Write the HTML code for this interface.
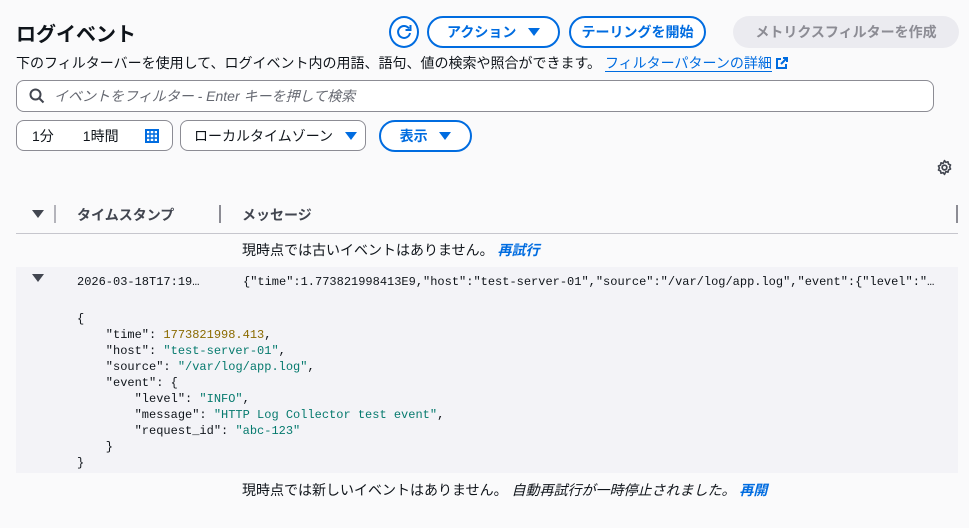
<!DOCTYPE html>
<html><head><meta charset="utf-8"><style>
body{margin:0;background:#fafafb;font-family:"Liberation Sans","Noto Sans CJK JP",sans-serif;color:#0f141a;width:969px;height:528px;overflow:hidden;position:relative}
.a{position:absolute;white-space:nowrap}
.btn{position:absolute;border:2px solid #006ce0;border-radius:18px;color:#006ce0;font-weight:bold;font-size:14px;box-sizing:border-box;display:flex;align-items:center;justify-content:center;background:#fff}
.box{position:absolute;border:1px solid #8c8c94;border-radius:8px;box-sizing:border-box;background:#fff;font-size:14px;display:flex;align-items:center}
.mono{font-family:"Liberation Mono","DejaVu Sans Mono",monospace;font-size:12px}
.tri{display:inline-block;width:0;height:0;border-left:6px solid transparent;border-right:6px solid transparent;border-top:8px solid currentColor}
.s{color:#067a6e}.n{color:#8a6a00}
</style></head><body>
<div class="a" style="left:16px;top:18px;font-size:20px;font-weight:bold">ログイベント</div>
<div class="btn" style="left:389px;top:16px;width:30px;height:32px;border-radius:50%">
<svg width="20" height="20" viewBox="0 0 20 20"><path d="M15 6.5A6 6 0 1 0 16 11" fill="none" stroke="#006ce0" stroke-width="2"/><path d="M16.5 3v5h-5" fill="none" stroke="#006ce0" stroke-width="2"/></svg></div>
<div class="btn" style="left:427px;top:16px;width:133px;height:32px">アクション&nbsp;&nbsp;&nbsp;<span class="tri"></span></div>
<div class="btn" style="left:569px;top:16px;width:137px;height:32px">テーリングを開始</div>
<div class="a" style="left:733px;top:16px;width:226px;height:32px;border-radius:16px;background:#ebebf0;color:#8c8c94;font-weight:bold;font-size:14px;display:flex;align-items:center;justify-content:center">メトリクスフィルターを作成</div>
<div class="a" style="left:16px;top:53px;font-size:14px">下のフィルターバーを使用して、ログイベント内の用語、語句、値の検索や照合ができます。 <span style="color:#006ce0;border-bottom:1px solid #006ce0">フィルターパターンの詳細</span> <svg width="12" height="12" viewBox="0 0 12 12" style="vertical-align:-1px"><path d="M7 1h4v4M11 1L5 7M5 2H1v9h9V7" fill="none" stroke="#006ce0" stroke-width="2"/></svg></div>
<div class="box" style="left:16px;top:80px;width:918px;height:32px;color:#656871;font-style:italic">
<svg width="18" height="18" viewBox="0 0 18 18" style="margin:0 8px 0 11px"><circle cx="7.5" cy="7.5" r="5" fill="none" stroke="#424650" stroke-width="2"/><path d="M11 11l4.5 4.5" stroke="#424650" stroke-width="2"/></svg>イベントをフィルター - Enter キーを押して検索</div>
<div class="box" style="left:16px;top:120px;width:157px;height:31px"><span style="margin-left:15px">1分</span><span style="margin-left:29px">1時間</span>
<svg width="14" height="14" viewBox="0 0 14 14" style="margin-left:26px"><rect x="1" y="1" width="12" height="12" fill="none" stroke="#006ce0" stroke-width="2"/><path d="M1 5h12M1 9h12M5 1v12M9 1v12" stroke="#006ce0" stroke-width="1.4"/></svg></div>
<div class="box" style="left:180px;top:120px;width:186px;height:31px"><span style="margin-left:13px">ローカルタイムゾーン</span><span class="tri" style="color:#006ce0;margin-left:12px"></span></div>
<div class="btn" style="left:379px;top:120px;width:93px;height:32px">表示&nbsp;&nbsp;&nbsp;<span class="tri"></span></div>
<svg class="a" style="left:936px;top:159px" width="17" height="17" viewBox="0 0 16 16"><circle cx="8" cy="8" r="2.2" fill="none" stroke="#424650" stroke-width="1.6"/><path d="M8 1.5l1.3 1.7 2-.6.4 2.1 2 .9-.9 1.9.9 1.9-2 .9-.4 2.1-2-.6L8 14.5l-1.3-1.7-2 .6-.4-2.1-2-.9.9-1.9-.9-1.9 2-.9.4-2.1 2 .6z" fill="none" stroke="#424650" stroke-width="1.5" stroke-linejoin="round"/></svg>
<span class="a tri" style="left:32px;top:210px;color:#424650"></span>
<div class="a" style="left:54px;top:205px;width:2px;height:18px;background:#b4b4bb"></div>
<div class="a" style="left:77px;top:205px;font-size:14px;font-weight:bold;color:#424650">タイムスタンプ</div>
<div class="a" style="left:219px;top:205px;width:2px;height:18px;background:#8c8c94"></div>
<div class="a" style="left:242px;top:205px;font-size:14px;font-weight:bold;color:#424650">メッセージ</div>
<div class="a" style="left:956px;top:205px;width:2px;height:18px;background:#8c8c94"></div>
<div class="a" style="left:16px;top:233px;width:942px;height:1px;background:#c6c6cd"></div>
<div class="a" style="left:242px;top:240px;font-size:14px">現時点では古いイベントはありません。 <i style="color:#006ce0;font-weight:bold">再試行</i></div>
<div class="a" style="left:16px;top:267px;width:942px;height:206px;background:#f3f3f7"></div>
<span class="a tri" style="left:32px;top:274px;color:#424650"></span>
<div class="a mono" style="left:77px;top:275px">2026-03-18T17:19…</div>
<div class="a mono" style="left:243px;top:275px">{"time":1.773821998413E9,"host":"test-server-01","source":"/var/log/app.log","event":{"level":"…</div>
<pre class="a mono" style="left:77px;top:311px;margin:0;line-height:16px;white-space:pre">{
    "time": <span class="n">1773821998.413</span>,
    "host": <span class="s">"test-server-01"</span>,
    "source": <span class="s">"/var/log/app.log"</span>,
    "event": {
        "level": <span class="s">"INFO"</span>,
        "message": <span class="s">"HTTP Log Collector test event"</span>,
        "request_id": <span class="s">"abc-123"</span>
    }
}</pre>
<div class="a" style="left:242px;top:480px;font-size:14px">現時点では新しいイベントはありません。 <i>自動再試行が一時停止されました。</i> <i style="color:#006ce0;font-weight:bold">再開</i></div>
</body></html>
